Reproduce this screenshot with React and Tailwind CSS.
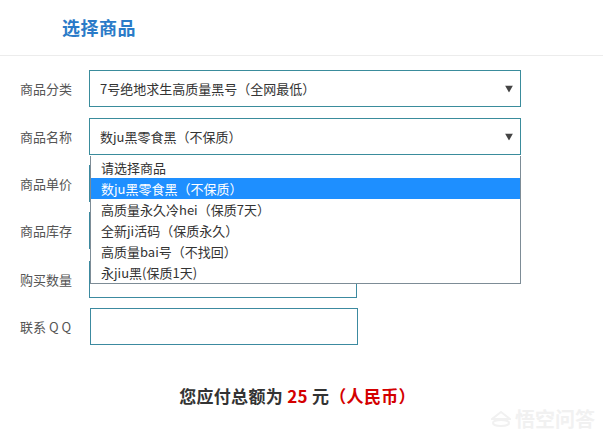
import React from 'react';

const font = { fontFamily: '"Noto Sans CJK SC", "Noto Sans", sans-serif' };

const options = [
  '请选择商品',
  '数ju黑零食黑（不保质）',
  '高质量永久冷hei（保质7天）',
  '全新ji活码（保质永久）',
  '高质量bai号（不找回）',
  '永jiu黑(保质1天)',
];

const Arrow = () => (
  <svg width="8" height="7" viewBox="0 0 8 7" className="absolute right-[7px] top-1/2 -translate-y-1/2">
    <path d="M0 0 L8 0 L4 7 Z" fill="#444" />
  </svg>
);

const Row = ({ label, className, children }) => (
  <div className={`flex items-center h-[37px] ${className || ''}`}>
    <div className="w-[89px] pl-[20px] text-[13px] text-[#555] whitespace-nowrap">{label}</div>
    {children}
  </div>
);

export default function App() {
  return (
    <div className="relative w-[603px] h-[444px] bg-white overflow-hidden" style={font}>
      {/* Header */}
      <div className="h-[56px] border-b border-[#ececec] flex items-center pl-[62px]">
        <h1 className="text-[18px] font-bold text-[#2a7bc8] tracking-[0.5px]">选择商品</h1>
      </div>

      {/* Form */}
      <div className="pt-[14px] flex flex-col">
        <Row label="商品分类">
          <div className="relative w-[432px] h-[37px] border border-[#3a8c9c] flex items-center pl-[10px] text-[13px] text-[#333]">
            7号绝地求生高质量黑号（全网最低）
            <Arrow />
          </div>
        </Row>
        <Row label="商品名称" className="mt-[11px]">
          <div className="relative w-[432px] h-[37px] border border-[#3a8c9c] flex items-center pl-[10px] text-[13px] text-[#333]">
            数ju黑零食黑（不保质）
            <Arrow />
          </div>
        </Row>
        <Row label="商品单价" className="mt-[10px]">
          <div className="w-[268px] h-[37px] border border-[#3c8aa0]" />
        </Row>
        <Row label="商品库存" className="mt-[10px]">
          <div className="w-[268px] h-[37px] border border-[#3c8aa0]" />
        </Row>
        <Row label="购买数量" className="mt-[12px]">
          <div className="w-[268px] h-[37px] border border-[#3c8aa0]" />
        </Row>
        <Row label="联系 Q Q" className="mt-[10px]">
          <div className="w-[268px] h-[37px] border border-[#3c8aa0] ml-[1px]" />
        </Row>

        <div className="mt-[38px] text-center pr-[8px] text-[17px] font-bold text-[#333] tracking-[0.3px]">
          您应付总额为 <span className="text-[#d40000]">25</span> 元<span className="text-[#d40000]">（人民币）</span>
        </div>
      </div>

      {/* Open dropdown list */}
      <div className="absolute left-[90px] top-[156px] w-[431px] h-[128px] border border-t-0 border-[#7d8c96] bg-white pt-[1px]">
        {options.map((o, i) => (
          <div
            key={o}
            className={`h-[21px] leading-[21px] pl-[10px] text-[13px] ${i === 1 ? 'bg-[#1e8fff] text-white' : 'text-[#333]'}`}
          >
            {o}
          </div>
        ))}
      </div>

      {/* Watermark */}
      <div className="absolute right-[8px] bottom-[10px] flex items-center gap-[4px] text-[#f1f1f1] text-[20px] font-bold">
        <svg width="20" height="16" viewBox="0 0 20 16">
          <path d="M10 1 L19 8 L1 8 Z" fill="none" stroke="#f1f1f1" strokeWidth="2" />
          <ellipse cx="10" cy="12" rx="8" ry="3" fill="none" stroke="#f1f1f1" strokeWidth="2" />
        </svg>
        <span>悟空问答</span>
      </div>
    </div>
  );
}
